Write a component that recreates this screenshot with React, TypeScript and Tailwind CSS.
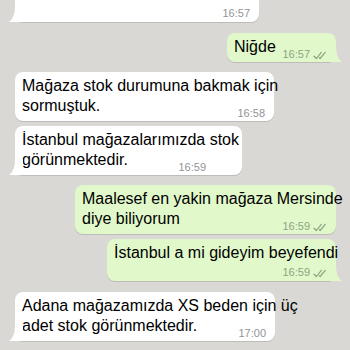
import clsx from "clsx";

type Msg = {
  out: boolean;
  lines: string[];
  time: string;
  w: string;
  mt: string;
  tail?: boolean;
  timeBelow?: boolean;
  timeMt?: string;
  timeMr?: string;
};

const messages: Msg[] = [
  {
    out: false,
    lines: ["Size yakın mağazamız hangi ilde?"],
    time: "16:57",
    w: "w-[244px]",
    mt: "-mt-[23px]",
    tail: true,
    timeBelow: true,
    timeMt: "mt-[5px]",
  },
  { out: true, lines: ["Niğde"], time: "16:57", w: "w-[109px]", mt: "mt-[11px]", tail: true },
  {
    out: false,
    lines: ["Mağaza stok durumuna bakmak için", "sormuştuk."],
    time: "16:58",
    w: "w-[259px]",
    mt: "mt-[10px]",
  },
  {
    out: false,
    lines: ["İstanbul mağazalarımızda stok", "görünmektedir."],
    time: "16:59",
    w: "w-[227px]",
    mt: "mt-[5px]",
    tail: true,
    timeMr: "mr-[27px]",
  },
  {
    out: true,
    lines: ["Maalesef en yakin mağaza Mersinde", "diye biliyorum"],
    time: "16:59",
    w: "w-[261px]",
    mt: "mt-[10px]",
  },
  {
    out: true,
    lines: ["İstanbul a mi gideyim beyefendi"],
    time: "16:59",
    w: "w-[229px]",
    mt: "mt-[5px]",
    tail: true,
    timeBelow: true,
  },
  {
    out: false,
    lines: ["Adana mağazamızda XS beden için üç", "adet stok görünmektedir."],
    time: "17:00",
    w: "w-[260px]",
    mt: "mt-[11px]",
    tail: true,
  },
  {
    out: true,
    lines: ["Tamam teşekkür ederim, oraya", "gitmeyi deneyeceğim"],
    time: "17:01",
    w: "w-[258px]",
    mt: "mt-[12px]",
  },
];

function Ticks() {
  return (
    <svg width="14" height="9" viewBox="0 0 14 9" fill="none" className="ml-[3px] mb-[1px]">
      <path d="M1 5.2 L3.4 7.5 L8.3 1.3" stroke="currentColor" strokeWidth="1.2" strokeLinecap="round" strokeLinejoin="round" />
      <path d="M6.3 6.7 L7.1 7.5 L12.2 1.3" stroke="currentColor" strokeWidth="1.2" strokeLinecap="round" strokeLinejoin="round" />
    </svg>
  );
}

function Time({ m }: { m: Msg }) {
  return (
    <span
      className={clsx(
        "flex items-end text-[11px] leading-[14px] whitespace-nowrap",
        m.out ? "text-[#8ba381]" : "text-[#939397]"
      )}
    >
      {m.time}
      {m.out && <Ticks />}
    </span>
  );
}

function Tail({ out }: { out: boolean }) {
  if (out) {
    return (
      <svg width="14" height="16" viewBox="0 0 14 16" className="absolute -right-[6px] bottom-0">
        <path d="M8 0 Q8 12 14 16 L0 16 L0 0 Z" fill="#e1f8cb" />
      </svg>
    );
  }
  return (
    <svg width="14" height="16" viewBox="0 0 14 16" className="absolute -left-[6px] bottom-0">
      <path d="M6 0 Q6 12 0 16 L14 16 L14 0 Z" fill="#ffffff" />
    </svg>
  );
}

function Bubble({ m }: { m: Msg }) {
  const rest = m.lines.slice(0, -1);
  const last = m.lines[m.lines.length - 1];
  return (
    <div
      className={clsx(
        "relative shrink-0 rounded-[8px] pl-[7px] pr-[9px] pt-[4px] shadow-[0_1px_0.5px_rgba(0,0,0,0.13)]",
        m.out ? "self-end bg-[#e1f8cb]" : "self-start bg-white",
        m.timeBelow ? "pb-[2px]" : "pb-[5px]",
        m.w,
        m.mt
      )}
    >
      {rest.map((l) => (
        <div key={l} className="leading-[20px] whitespace-nowrap">
          {l}
        </div>
      ))}
      {m.timeBelow ? (
        <>
          <div className="leading-[20px] whitespace-nowrap">{last}</div>
          <div className={clsx("flex justify-end", m.timeMt ?? "mt-[2px]")}>
            <Time m={m} />
          </div>
        </>
      ) : (
        <div className="flex items-end">
          <span className="leading-[20px] whitespace-nowrap">{last}</span>
          <span className={clsx("ml-auto translate-y-[4px]", m.timeMr)}>
            <Time m={m} />
          </span>
        </div>
      )}
      {m.tail && <Tail out={m.out} />}
    </div>
  );
}

export default function App() {
  return (
    <div className="w-[350px] h-[350px] overflow-hidden bg-[#d9d8d5] font-['Liberation_Sans',Arial,sans-serif] text-[16px] text-black">
      <div className="flex flex-col pl-[15px] pr-[14px]">
        {messages.map((m, i) => (
          <Bubble key={i} m={m} />
        ))}
      </div>
    </div>
  );
}
